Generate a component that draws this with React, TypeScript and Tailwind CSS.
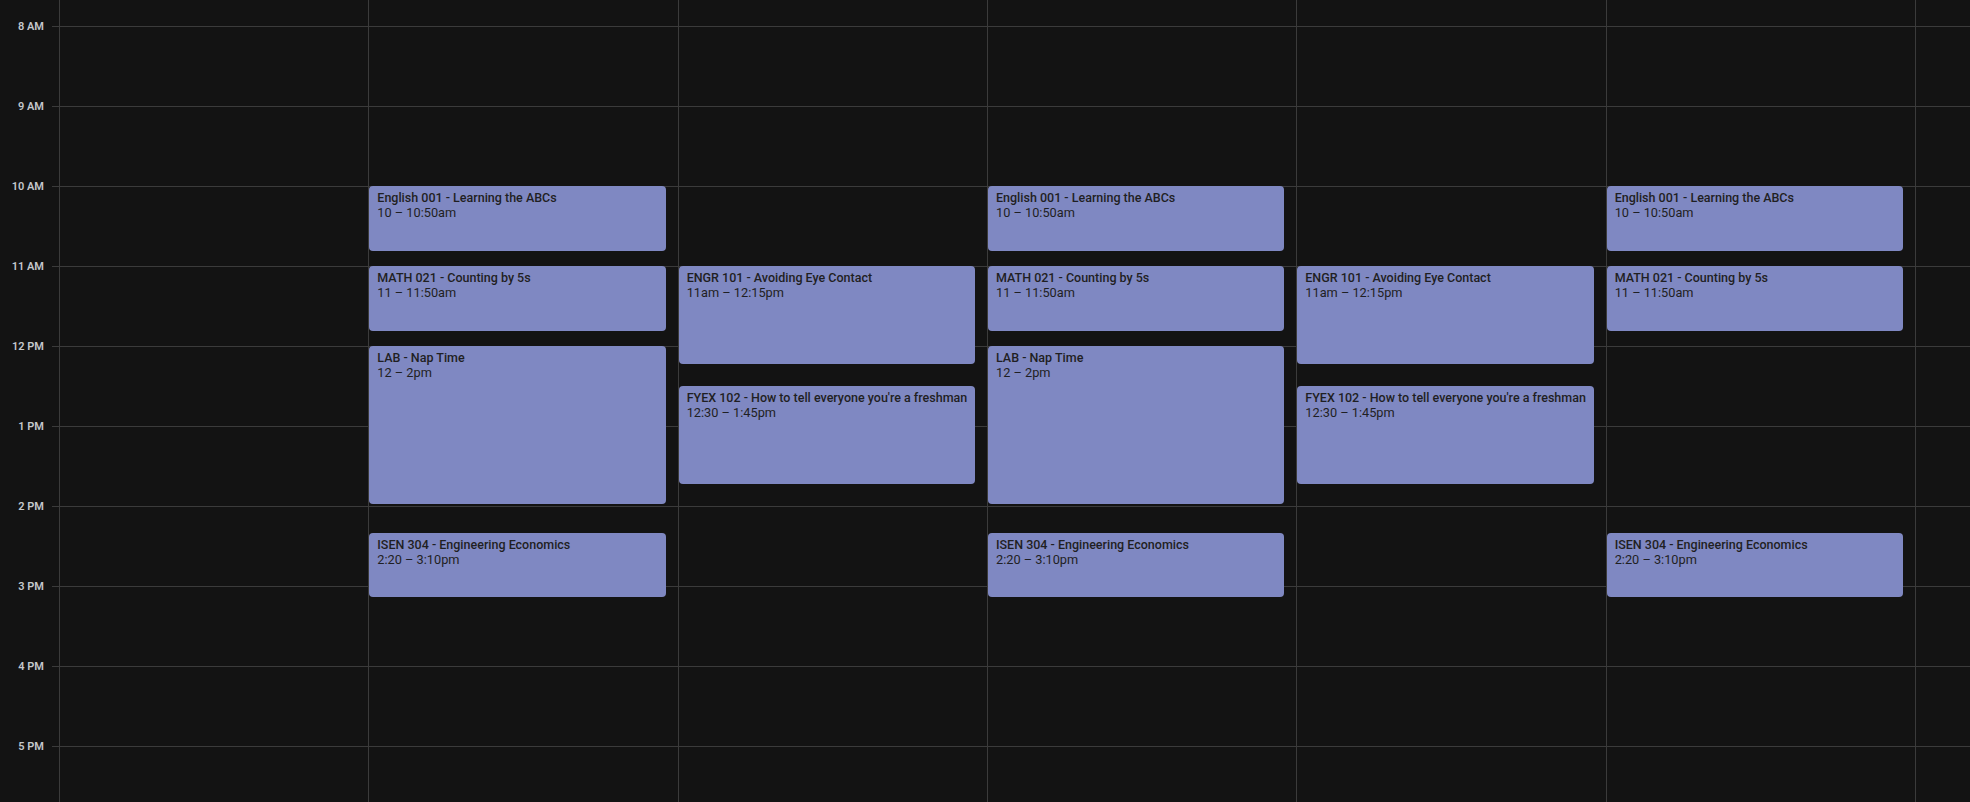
import React from "react";

type Ev = { title: string; time: string; start: number; end: number };

const HOUR_PX = 80;
const FIRST_HOUR = 8;
const TOP_OFFSET = 26;

const english: Ev = { title: "English 001 - Learning the ABCs", time: "10 – 10:50am", start: 10, end: 10 + 50 / 60 };
const math: Ev = { title: "MATH 021 - Counting by 5s", time: "11 – 11:50am", start: 11, end: 11 + 50 / 60 };
const lab: Ev = { title: "LAB - Nap Time", time: "12 – 2pm", start: 12, end: 14 };
const isen: Ev = { title: "ISEN 304 - Engineering Economics", time: "2:20 – 3:10pm", start: 14 + 20 / 60, end: 15 + 10 / 60 };
const engr: Ev = { title: "ENGR 101 - Avoiding Eye Contact", time: "11am – 12:15pm", start: 11, end: 12.25 };
const fyex: Ev = { title: "FYEX 102 - How to tell everyone you're a freshman", time: "12:30 – 1:45pm", start: 12.5, end: 13.75 };

const days: Ev[][] = [
  [],
  [english, math, lab, isen],
  [engr, fyex],
  [english, math, lab, isen],
  [engr, fyex],
  [english, math, isen],
  [],
];

const hours = ["8 AM", "9 AM", "10 AM", "11 AM", "12 PM", "1 PM", "2 PM", "3 PM", "4 PM", "5 PM"];

function yFor(h: number) {
  return TOP_OFFSET + (h - FIRST_HOUR) * HOUR_PX;
}

const EventCard: React.FC<{ ev: Ev }> = ({ ev }) => {
  const top = yFor(ev.start);
  const height = (ev.end - ev.start) * HOUR_PX - 2;
  return (
    <div
      className="absolute left-0 right-[12px] rounded-[4px] bg-[#7f88c2] pl-2 pr-1 pt-[4px] overflow-hidden text-[#1f1f23]"
      style={{ top, height }}
    >
      <p className="text-[12.5px] leading-[15px] font-medium whitespace-nowrap">{ev.title}</p>
      <p className="text-[12.75px] leading-[15px] whitespace-nowrap">{ev.time}</p>
    </div>
  );
};

export default function App() {
  return (
    <div
      className="w-[1970px] h-[802px] overflow-hidden bg-[#131313] flex"
      style={{ fontFamily: "Roboto, 'Noto Sans', sans-serif" }}
    >
      {/* time gutter */}
      <div className="w-[60px] shrink-0 h-full flex flex-col border-r border-[#3b3b3b]">
        <div className="h-[26px] shrink-0" />
        {hours.map((h) => (
          <div key={h} className="h-[80px] shrink-0 flex items-start">
            <span className="w-[52px] pr-[8px] text-right -mt-[6px] text-[11px] leading-[13px] font-semibold text-[#c4c7cc]">
              {h}
            </span>
            <span className="flex-1 border-t border-[#3b3b3b]" />
          </div>
        ))}
      </div>

      {/* day columns */}
      {days.map((evs, i) => (
        <div key={i} className="w-[309.33px] shrink-0 h-full relative border-r border-[#3b3b3b]">
          <div className="flex flex-col">
            <div className="h-[26px] shrink-0" />
            {hours.map((h) => (
              <div key={h} className="h-[80px] shrink-0 border-t border-[#3b3b3b]" />
            ))}
          </div>
          {evs.map((ev) => (
            <EventCard key={ev.title} ev={ev} />
          ))}
        </div>
      ))}
    </div>
  );
}
